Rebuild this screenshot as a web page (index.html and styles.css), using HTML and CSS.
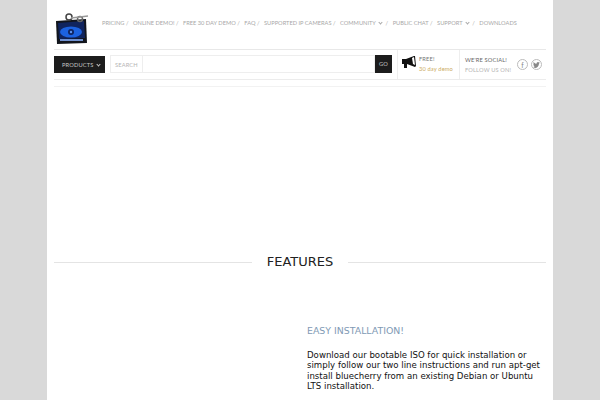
FILE: index.html
```html
<!DOCTYPE html>
<html>
<head>
  <meta charset="UTF-8">
  <title>Bluecherry</title>
  <link rel="stylesheet" href="styles.css">
</head>
<body>
  <div class="page">
    <div class="top">
      <div class="logo">
        <svg width="34" height="32" viewBox="0 0 34 32">
          <polygon points="1,8 31,6 32,30 2,31" fill="#12151c"/>
          <polygon points="3,10 29,8 30,25 4,26" fill="#10245e"/>
          <ellipse cx="16" cy="19" rx="11" ry="5.500" fill="#1c62e0"/>
          <circle cx="16" cy="19" r="3" fill="#10245e"/>
          <circle cx="16" cy="19" r="1.200" fill="#5f93ef"/>
          <rect x="5" y="26" width="23" height="2" fill="#6f90cf"/>
          <circle cx="14" cy="4" r="3" fill="none" stroke="#444" stroke-width="1.500"/>
          <circle cx="25" cy="6" r="2.500" fill="none" stroke="#666" stroke-width="1.500"/>
          <path d="M16 5 L33 3" stroke="#999" stroke-width="1.500"/>
        </svg>
      </div>
      <ul class="nav">
        <li>PRICING /</li>
        <li>ONLINE DEMO! /</li>
        <li>FREE 30 DAY DEMO /</li>
        <li>FAQ /</li>
        <li>SUPPORTED IP CAMERAS /</li>
        <li>COMMUNITY <span class="caret"></span> /</li>
        <li>PUBLIC CHAT /</li>
        <li>SUPPORT <span class="caret"></span> /</li>
        <li>DOWNLOADS</li>
      </ul>
    </div>

    <div class="toolbar">
      <div class="products">PRODUCTS <span class="caret"></span></div>
      <div class="searchBox">
        <span class="searchLabel">SEARCH</span>
        <span class="searchInput"></span>
        <span class="go">GO</span>
      </div>
      <div class="promo">
        <svg class="horn" width="14" height="12" viewBox="0 0 14 12">
          <path d="M0 3 L4 3 L12 0 L13 0 L14 10 L13 11 L5 8 L5 12 L2 12 L2 8 L0 8 Z" fill="#111"/>
          <path d="M10 2 L12 1 L13 9 L11 8 Z" fill="#fff"/>
        </svg>
        <div>
          <div>FREE!</div>
          <div class="gold">30 day demo</div>
        </div>
      </div>
      <div class="social">
        <div class="socialText">
          <div class="dark">WE'RE SOCIAL!</div>
          <div>FOLLOW US ON!</div>
        </div>
        <span class="circle">f</span>
        <span class="circle">
          <svg width="7" height="6" viewBox="0 0 14 12"><path d="M14 1.500 12 3C12 8 8 12 4 12 2.500 12 1 11.500 0 11 2 11 3 10.500 4 10 2 9.500 1 8 1 7 1.500 7 2 7 2.500 7 1 6 .5 4.500 .5 3 1 3.300 1.500 3.500 2 3.500 .5 2 .5 1 1 0 3 2.500 5 3.500 7 3.500 7 1.500 8.500 0 10 0 11 0 11.500.5 12 1Z" fill="#888"/></svg>
        </span>
      </div>
    </div>
    <div class="thinRule"></div>

    <div class="heading">
      <span class="line"></span>
      <h2>FEATURES</h2>
      <span class="line"></span>
    </div>

    <div class="feature">
      <h3>EASY INSTALLATION!</h3>
      <p>Download our bootable ISO for quick installation or simply follow our two line instructions and run apt-get install bluecherry from an existing Debian or Ubuntu LTS installation.</p>
    </div>
  </div>
</body>
</html>
```

FILE: styles.css
```css
* {
  margin: 0;
  padding: 0;
  box-sizing: border-box;
}

html, body {
  height: 400px;
  overflow: hidden;
}

body {
  background-color: #d9d9d9;
  font-family: "DejaVu Sans", sans-serif;
}

.page {
  width: 506px;
  height: 400px;
  margin: 0 auto;
  padding: 0 7px;
  background-color: #fff;
  overflow: hidden;
}

.top {
  display: flex;
  height: 50px;
  border-bottom: 1px solid #e8e8e8;
}

.logo {
  flex: none;
  width: 48px;
  padding: 13px 0 0 1px;
}

.nav {
  display: flex;
  gap: 4.500px;
  padding-top: 19px;
  list-style-type: none;
  font-family: "Lato", sans-serif;
  font-size: 5.700px;
  line-height: 8px;
  color: #a8a8a8;
  white-space: nowrap;
}

.caret {
  display: inline-block;
  width: 3px;
  height: 3px;
  margin: 0 2px 1px 2px;
  border-right: 1px solid currentColor;
  border-bottom: 1px solid currentColor;
  transform: rotate(45deg);
}

.toolbar {
  display: flex;
  height: 30px;
  border-bottom: 1px solid #ececec;
}

.products {
  flex: none;
  width: 51px;
  height: 17px;
  margin-top: 6px;
  padding-left: 8px;
  background-color: #1c1c1c;
  color: #c4c4c4;
  font-family: "Lato", sans-serif;
  font-size: 5.700px;
  letter-spacing: 0.150px;
  line-height: 17px;
  white-space: nowrap;
}

.searchBox {
  display: flex;
  flex: none;
  width: 282px;
  height: 18px;
  margin: 5px 0 0 5px;
  font-family: "Lato", sans-serif;
  font-size: 5.700px;
  letter-spacing: 0.150px;
  line-height: 17px;
  color: #b4b4b4;
}

.searchLabel {
  width: 32px;
  padding-left: 4px;
  border: 1px solid #eee;
  border-right: 0;
}

.searchInput {
  flex: 1;
  border: 1px solid #eee;
}

.go {
  width: 17px;
  background-color: #1c1c1c;
  color: #c4c4c4;
  text-align: center;
}

.promo {
  display: flex;
  flex: none;
  gap: 3px;
  width: 63px;
  margin-left: 5px;
  padding: 4px 0 0 4px;
  border-left: 1px solid #eee;
  border-right: 1px solid #eee;
  font-family: "Lato", sans-serif;
  font-size: 5.700px;
  letter-spacing: 0.150px;
  line-height: 10px;
  color: #777;
  white-space: nowrap;
}

.horn {
  flex: none;
  margin-top: 2px;
}

.gold {
  color: #cbab62;
}

.social {
  display: flex;
  flex: none;
  align-items: center;
  padding-left: 5px;
  font-family: "Lato", sans-serif;
  font-size: 5.700px;
  letter-spacing: 0.150px;
  line-height: 10px;
  color: #b4b4b4;
  white-space: nowrap;
}

.dark {
  color: #666;
}

.socialText {
  width: 52px;
}

.circle {
  display: flex;
  align-items: center;
  justify-content: center;
  width: 11px;
  height: 11px;
  margin-right: 3px;
  border: 1px solid #bbb;
  border-radius: 50%;
  color: #888;
  font-size: 7px;
}

.thinRule {
  height: 7px;
  border-bottom: 1px solid #f2f2f2;
}

.heading {
  display: flex;
  align-items: center;
  gap: 15px;
  margin-top: 166px;
}

.line {
  flex: 1;
  height: 1px;
  background-color: #e4e4e4;
}

.heading h2 {
  font-size: 13px;
  font-weight: normal;
  line-height: 18px;
  color: #222;
}

.feature {
  margin: 53px 0 0 253px;
}

.feature h3 {
  font-size: 9.400px;
  font-weight: normal;
  line-height: 14px;
  color: #7f9ab5;
}

.feature p {
  margin-top: 12px;
  font-size: 8.600px;
  line-height: 10.400px;
  color: #111;
}
```
